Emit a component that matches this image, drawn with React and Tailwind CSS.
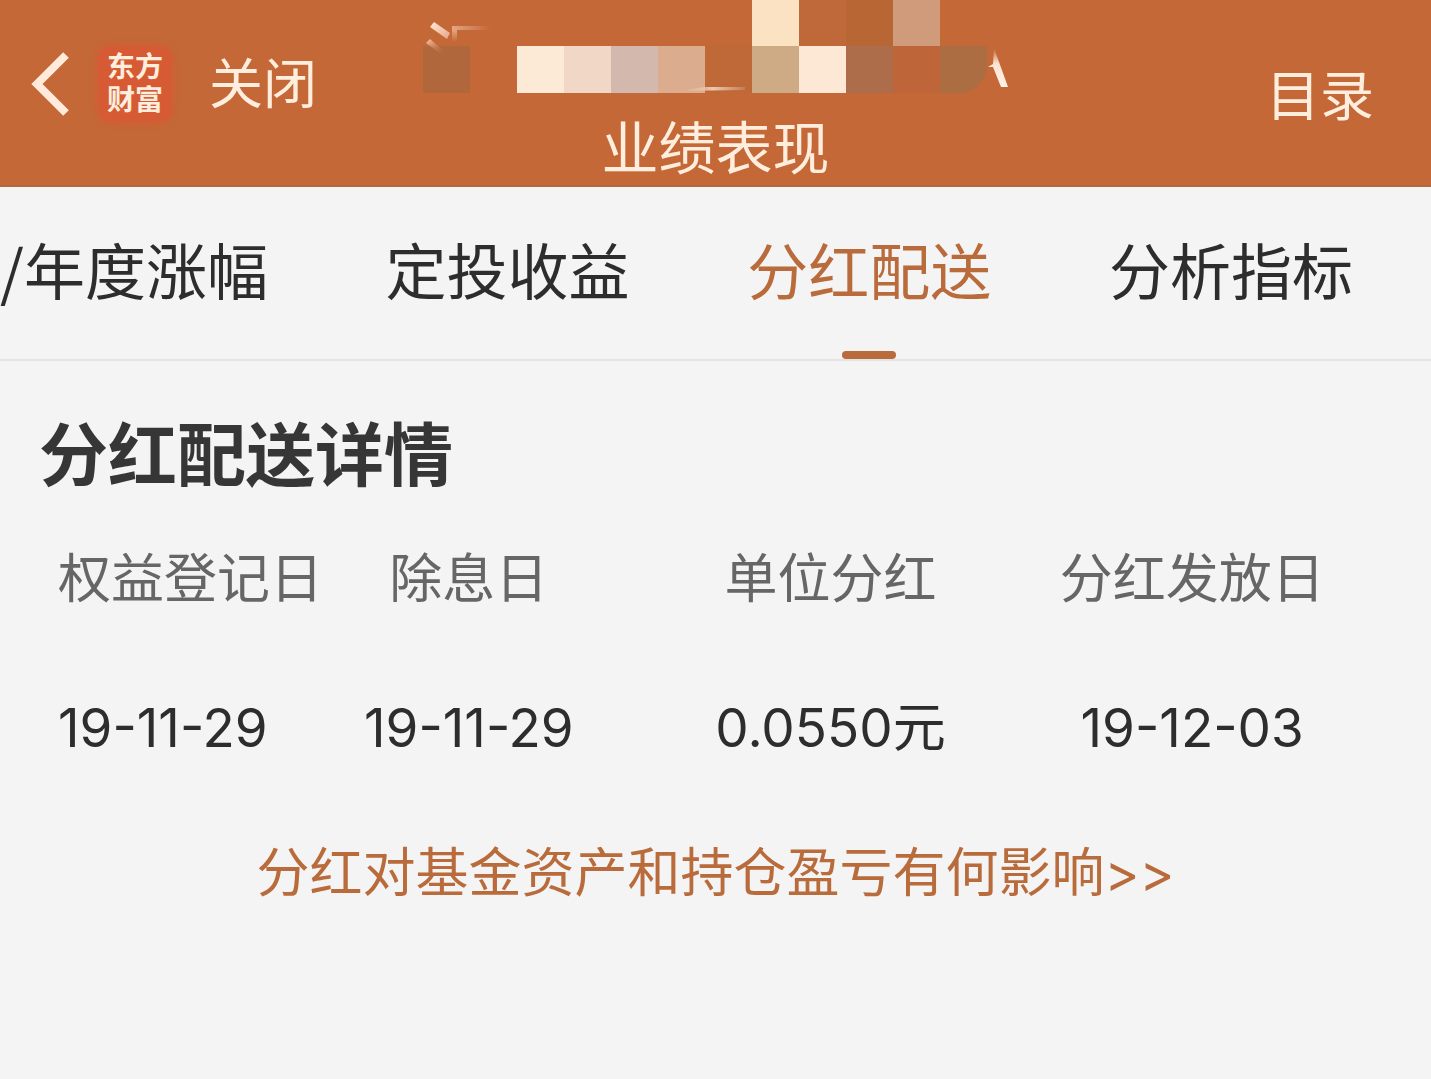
const tabs = ['/年度涨幅', '定投收益', '分红配送', '分析指标'];
const activeTab = '分红配送';

const columns = ['权益登记日', '除息日', '单位分红', '分红发放日'];
const dividends = [
  { recordDate: '19-11-29', exDate: '19-11-29', amount: '0.0550', payDate: '19-12-03' },
];

// pixelated cover over the fund name
const mosaic = [
  { x: 330, y: 0, fill: '#fbe2c3' },
  { x: 377, y: 0, fill: '#bf683a' },
  { x: 424, y: 0, fill: '#b96635' },
  { x: 471, y: 0, fill: '#cf9b7a' },
  { x: 1, y: 46, fill: '#b1673c' },
  { x: 95, y: 46, fill: '#fcead7' },
  { x: 142, y: 46, fill: '#f1d7c6' },
  { x: 189, y: 46, fill: '#d3b9ad' },
  { x: 236, y: 46, fill: '#dbac8e' },
  { x: 283, y: 46, fill: '#bf6838' },
  { x: 330, y: 46, fill: '#ceab84' },
  { x: 377, y: 46, fill: '#fde8d5' },
  { x: 424, y: 46, fill: '#ad6d4a' },
  { x: 471, y: 46, fill: '#be663a' },
];

function MaskedName() {
  return (
    <svg className="block" width="588" height="94" viewBox="0 0 588 94" aria-hidden="true">
      <defs>
        <linearGradient id="fadeRight" x1="0" x2="1" y1="0" y2="0">
          <stop offset="0" stopColor="#e3a582" />
          <stop offset="1" stopColor="#e3a582" stopOpacity="0" />
        </linearGradient>
        <linearGradient id="fadeDown" x1="0" x2="0" y1="0" y2="1">
          <stop offset="0" stopColor="#e3a582" />
          <stop offset="1" stopColor="#e3a582" stopOpacity="0" />
        </linearGradient>
        <linearGradient id="fadeDrop" x1="0" x2="1" y1="0" y2="1">
          <stop offset="0" stopColor="#ffead8" />
          <stop offset="1" stopColor="#e5a586" />
        </linearGradient>
        <linearGradient id="fadeDrop2" x1="0" x2="1" y1="0" y2="1">
          <stop offset="0" stopColor="#f5cdb2" />
          <stop offset="1" stopColor="#c46837" stopOpacity="0" />
        </linearGradient>
        <linearGradient id="fadeStreak" x1="0" x2="1" y1="0" y2="0">
          <stop offset="0" stopColor="#ecc8b0" stopOpacity="0" />
          <stop offset="0.5" stopColor="#ecc8b0" />
          <stop offset="1" stopColor="#ecc8b0" stopOpacity="0.2" />
        </linearGradient>
        <linearGradient id="fadeUp" x1="0" x2="0" y1="1" y2="0">
          <stop offset="0" stopColor="#fff3ea" />
          <stop offset="0.6" stopColor="#fbe3d2" />
          <stop offset="1" stopColor="#fbe3d2" stopOpacity="0" />
        </linearGradient>
      </defs>
      {mosaic.map(m => <rect key={`${m.x}-${m.y}`} x={m.x} y={m.y} width="47" height={m.y ? 47 : 46} fill={m.fill} />)}
      <path d="M518 46h47v22q-4 20-22 25h-25z" fill="#ac6d42" />
      <path d="M8 27l4-5 16 11-3 6z" fill="url(#fadeDrop)" />
      <path d="M4 43l4-4 14 12-3 3z" fill="url(#fadeDrop2)" />
      <path d="M30 26h38v4H30z" fill="url(#fadeRight)" />
      <path d="M30 30h5v12h-5z" fill="url(#fadeDown)" />
      <path d="M258 91l24-4h41v3z" fill="url(#fadeStreak)" />
      <path d="M572 48l14 39h-7l-8-20h-5l5-3z" fill="url(#fadeUp)" />
    </svg>
  );
}

function Header() {
  return (
    <header className="grid grid-cols-[1fr_auto_1fr] bg-[#c46837] text-[#ffeedd] border-b-2 border-[#b0683f]">
      <div className="flex items-center h-[168px]">
        <button type="button" aria-label="返回" className="ml-[30px] w-10 h-[66px]">
          <svg width="40" height="66" viewBox="0 0 40 66" fill="none" stroke="#ffeadb" strokeWidth="8">
            <path d="M36 4L7 33l29 29" />
          </svg>
        </button>
        <div className="ml-[29px] pb-1 w-[72px] h-[74px] flex flex-col items-center justify-center rounded-xl bg-[#d65b35] shadow-[0_0_6px_2px_#d65b35] text-[28px] leading-[33px] font-bold">
          <span>东方</span>
          <span>财富</span>
        </div>
        <button type="button" className="ml-[38px] pb-1.5 text-[54px] leading-[72px] whitespace-nowrap">关闭</button>
      </div>
      <div className="flex flex-col items-center pb-1">
        <MaskedName />
        <h1 className="mt-3.5 text-[57px] leading-[73px]">业绩表现</h1>
      </div>
      <div className="flex items-center justify-end pr-[57px]">
        <button type="button" className="text-[54px] leading-[72px]">目录</button>
      </div>
    </header>
  );
}

export default function App() {
  return (
    <div className="min-h-screen bg-[#f4f4f4] text-[#2d2d2d] font-['Noto_Sans_CJK_SC',sans-serif]">
      <Header />
      <nav className="flex justify-between pr-[78px] border-b-2 border-[#e3e3e3] overflow-hidden">
        {tabs.map(t => (
          <button key={t} type="button" className={`relative h-[172px] pb-2 text-[61px] leading-[164px] whitespace-nowrap ${t === activeTab ? 'text-[#b96b3b]' : ''}`}>
            {t}
            {t === activeTab && <span className="absolute bottom-0 left-1/2 -translate-x-1/2 w-[54px] h-2 rounded-full bg-[#b96b3b]" />}
          </button>
        ))}
      </nav>
      <main className="pt-[54px]">
        <h2 className="pl-[39px] text-[69px] leading-[72px] font-bold text-[#363636]">分红配送详情</h2>
        <div className="mt-4 px-[58px]">
          <table className="w-full table-fixed whitespace-nowrap">
            <thead>
              <tr className="h-[146px] text-[53px] text-[#666666]">
                {columns.map((c, i) => (
                  <th key={c} className={`p-0 font-normal ${i === 0 ? 'w-[230px] text-left' : 'text-center'}`}>{c}</th>
                ))}
              </tr>
            </thead>
            <tbody>
              {dividends.map(d => (
                <tr key={d.recordDate} className="h-[160px] text-[53px] text-center font-[Inter,'Noto_Sans_CJK_SC',sans-serif]">
                  <td className="p-0 text-left">{d.recordDate}</td>
                  <td className="p-0">{d.exDate}</td>
                  <td className="p-0">{d.amount}元</td>
                  <td className="p-0">{d.payDate}</td>
                </tr>
              ))}
            </tbody>
          </table>
        </div>
        <p className="text-center text-[53px] leading-[120px] text-[#b96b3b]">
          <a href="#impact">分红对基金资产和持仓盈亏有何影响<span className="font-[Inter,sans-serif]">&gt;&gt;</span></a>
        </p>
      </main>
    </div>
  );
}
